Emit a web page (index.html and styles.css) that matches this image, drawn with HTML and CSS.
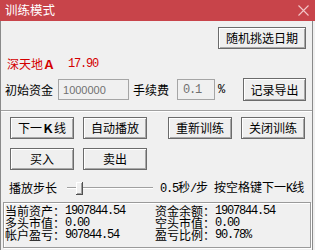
FILE: index.html
```html
<!DOCTYPE html>
<html>
<head>
<meta charset="utf-8">
<link rel="stylesheet" href="styles.css">
</head>
<body>
<div class="win">
  <div class="titlebar">
    <span class="title">训练模式</span>
    <svg class="close" width="11" height="11" viewBox="0 0 11 11"><path d="M0.5 0.5L10.5 10.5M10.5 0.5L0.5 10.5" stroke="#f2c6c8" stroke-width="1.1" fill="none"/></svg>
  </div>
  <div class="body">
    <div class="row row-top"><button class="btn btn-wide">随机挑选日期</button></div>
    <div class="stock"><span class="stock-name">深天地<b class="wide-letter">Ａ</b></span><span class="num stock-price">17.90</span></div>
    <div class="row row-fund">
      <span class="label">初始资金</span>
      <span class="input input-fund">1000000</span>
      <span class="label label-fee">手续费</span>
      <span class="input input-fee num">0.1</span>
      <span class="pct num">%</span>
      <button class="btn btn-export">记录导出</button>
    </div>
    <div class="sep"></div>
    <div class="row row-ctrl">
      <button class="btn">下一<b class="wide-letter">Ｋ</b>线</button>
      <button class="btn">自动播放</button>
      <button class="btn btn-gap">重新训练</button>
      <button class="btn">关闭训练</button>
    </div>
    <div class="row row-trade">
      <button class="btn">买入</button>
      <button class="btn">卖出</button>
    </div>
    <div class="row row-step">
      <span class="label">播放步长</span>
      <div class="slider"><div class="track"></div><div class="thumb"></div></div>
      <span class="step-text"><span class="num">0.5</span>秒<span class="num">/</span>步<span class="num"> </span>按空格键下一<span class="num">K</span>线</span>
    </div>
    <div class="panel">
      <div class="cell"><span class="k">当前资产：</span><span class="num">1907844.54</span></div>
      <div class="cell"><span class="k">资金余额：</span><span class="num">1907844.54</span></div>
      <div class="cell"><span class="k">多头市值：</span><span class="num">0.00</span></div>
      <div class="cell"><span class="k">空头市值：</span><span class="num">0.00</span></div>
      <div class="cell"><span class="k">帐户盈亏：</span><span class="num">907844.54</span></div>
      <div class="cell"><span class="k">盈亏比例：</span><span class="num">90.78%</span></div>
    </div>
  </div>
</div>
</body>
</html>
```
FILE: styles.css
```css
* { box-sizing: border-box; margin: 0; padding: 0; }
html, body { width: 315px; height: 250px; overflow: hidden; background: #f0f0f0; }
body { font-family: "Noto Sans CJK SC", sans-serif; font-size: 12px; color: #000; line-height: 14px; }

.win { width: 315px; height: 250px; display: flex; flex-direction: column; }
.titlebar { height: 21px; background: #c8444a; display: flex; align-items: center; padding: 0 6px 1px 5px; color: #fff; }
.title { font-size: 12.5px; line-height: 14px; }
.close { margin-left: auto; }

.body { flex: 1; width: 313px; border-left: 1px solid #8a8a8a; border-right: 1px solid #8a8a8a; display: flex; flex-direction: column; }

.num { font-family: "Liberation Mono", monospace; font-size: 12px; letter-spacing: -1.2px; white-space: pre; }
.wide-letter { font-weight: 700; }

.row { display: flex; align-items: center; }
.row-top { margin-top: 6px; justify-content: flex-end; padding-right: 6px; }

.btn { font-family: inherit; font-size: 12px; line-height: 14px; height: 22px; width: 64px; border: 1px solid #6b6b6b; background: #efefef; box-shadow: inset 1px 1px 0 #fff, inset -1px -1px 0 #a8a8a8; color: #000; display: flex; align-items: center; justify-content: center; padding: 0; }
.btn-wide { width: 88px; }

.stock { margin-top: 8px; padding-left: 6px; height: 14px; display: flex; align-items: center; color: #d40000; }
.stock-price { margin-left: 13px; }

.row-fund { margin-top: 7px; height: 23px; padding-left: 4px; padding-right: 6px; }
.input { height: 21px; border: 1px solid #a5a5a5; background: #f0f0f0; color: #707070; display: flex; align-items: center; }
.input-fund { margin-left: 5px; width: 71px; padding-left: 4px; font-family: "Liberation Sans", sans-serif; font-size: 11px; }
.label-fee { margin-left: 4px; }
.input-fee { margin-left: 8px; width: 38px; padding-left: 5px; }
.pct { margin-left: 3px; }
.btn-export { margin-left: auto; width: 63px; height: 23px; }

.sep { margin-top: 9px; height: 2px; border-top: 1px solid #a0a0a0; border-bottom: 1px solid #fff; }

.row-ctrl { margin-top: 5px; padding-left: 9px; gap: 9px; }
.btn-gap { margin-left: 12px; }
.row-trade { margin-top: 9px; padding-left: 9px; gap: 9px; }

.row-step { margin-top: 10px; height: 16px; padding-left: 8px; }
.slider { position: relative; margin-left: 10px; width: 86px; height: 16px; display: flex; align-items: center; }
.track { width: 100%; height: 2px; border-top: 1px solid #a0a0a0; border-bottom: 1px solid #fff; }
.thumb { position: absolute; left: 9px; top: 2px; width: 7px; height: 13px; background: #f0f0f0; border-right: 1px solid #505050; border-bottom: 1px solid #505050; box-shadow: inset 1px 1px 0 #fff, inset -1px -1px 0 #a0a0a0; }
.step-text { margin-left: 7px; }

.panel { margin: 6px 0 0 2px; width: 308px; height: 46px; border: 1px solid #9a9a9a; box-shadow: 1px 1px 0 #fff, inset 1px 1px 0 #fff; display: grid; grid-template-columns: 150px 1fr; grid-auto-rows: 12px; align-content: start; padding: 2px 0 0 1px; line-height: 12px; }
.cell { display: flex; align-items: center; white-space: nowrap; }
```
